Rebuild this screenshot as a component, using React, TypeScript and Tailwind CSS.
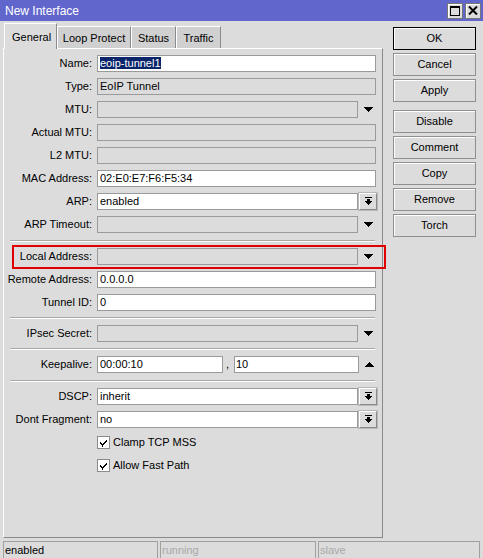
import React from 'react';

type Arrow = 'down' | 'up' | 'menu';

interface FieldProps {
  label: string;
  value?: string;
  enabled?: boolean;
  arrow?: Arrow;
  selected?: boolean;
}

const DownTriangle = () => (
  <svg width="9" height="5" viewBox="0 0 9 5" shapeRendering="crispEdges">
    <path d="M0 0H9L4.5 5Z" fill="#000" />
  </svg>
);

const UpTriangle = () => (
  <svg width="9" height="5" viewBox="0 0 9 5" shapeRendering="crispEdges">
    <path d="M0 5H9L4.5 0Z" fill="#000" />
  </svg>
);

const MenuButton = () => (
  <div className="w-[18px] h-[17px] ml-[1px] flex items-center justify-center bg-[#dcdcdc] border border-t-white border-l-white border-r-[#8a8a8a] border-b-[#8a8a8a] shadow-[0_0_0_1px_#b8b8b8]">
    <svg width="9" height="9" viewBox="0 0 9 9" shapeRendering="crispEdges">
      <rect x="1" y="0" width="7" height="1" fill="#000" />
      <rect x="3" y="2" width="3" height="2" fill="#000" />
      <path d="M1 4H8L4.5 8Z" fill="#000" />
    </svg>
  </div>
);

const ArrowSlot = ({ arrow }: { arrow?: Arrow }) => {
  if (arrow === 'menu') return <MenuButton />;
  return (
    <div className="w-[18px] h-[17px] ml-[1px] flex items-center justify-center">
      {arrow === 'up' ? <UpTriangle /> : <DownTriangle />}
    </div>
  );
};

const Field: React.FC<FieldProps> = ({ label, value, enabled, arrow, selected }) => (
  <div className="flex items-center h-[17px]">
    <div className="w-[88px] text-right whitespace-nowrap">{label}</div>
    <div
      className={`ml-[5px] h-[17px] border border-[#9a9a9a] px-[2px] leading-[15px] whitespace-nowrap overflow-hidden ${
        arrow ? 'w-[261px]' : 'w-[279px]'
      } ${enabled ? 'bg-white' : 'bg-[#dcdcdc]'}`}
    >
      {selected ? <span className="bg-[#0a246a] text-white">{value}</span> : value}
    </div>
    {arrow && <ArrowSlot arrow={arrow} />}
  </div>
);

const Separator = ({ className = '' }: { className?: string }) => (
  <div className={`ml-[6px] w-[365px] h-[2px] border-t border-t-[#a8a8a8] border-b border-b-white ${className}`} />
);

const Check: React.FC<{ label: string }> = ({ label }) => (
  <div className="flex items-center h-[17px] pl-[93px]">
    <div className="w-[13px] h-[13px] bg-white border border-[#8a8a8a] flex items-center justify-center">
      <svg width="9" height="9" viewBox="0 0 9 9" shapeRendering="crispEdges">
        <path d="M1 4L3.5 6.5L8 1.5V3.5L3.5 8.5L1 6Z" fill="#000" />
      </svg>
    </div>
    <span className="ml-[3px]">{label}</span>
  </div>
);

const Button: React.FC<{ label: string; primary?: boolean; className?: string }> = ({
  label,
  primary,
  className = ''
}) => (
  <div
    className={`w-[83px] h-[23px] flex items-center justify-center bg-[#dcdcdc] border shadow-[inset_1px_1px_0_#fff] ${
      primary ? 'border-black' : 'border-[#8f8f8f]'
    } ${className}`}
  >
    {label}
  </div>
);

export default function App() {
  return (
    <div className="w-[483px] h-[558px] bg-[#dcdcdc] flex flex-col overflow-hidden text-[11px] text-black font-['Liberation_Sans',Arial,sans-serif]">
      {/* title bar */}
      <div className="h-[21px] bg-[#6166cc] flex items-center pl-[5px] pr-[2px] shrink-0">
        <span className="text-white text-[12px]">New Interface</span>
        <div className="ml-auto flex gap-[2px]">
          <div className="w-[16px] h-[16px] bg-[#dcdcdc] border border-[#777] shadow-[inset_1px_1px_0_#fff] flex items-center justify-center">
            <svg width="10" height="10" viewBox="0 0 10 10" shapeRendering="crispEdges">
              <rect x="0.5" y="0.5" width="9" height="9" fill="none" stroke="#000" />
              <rect x="0" y="0" width="10" height="2" fill="#000" />
            </svg>
          </div>
          <div className="w-[16px] h-[16px] bg-[#dcdcdc] border border-[#777] shadow-[inset_1px_1px_0_#fff] flex items-center justify-center">
            <svg width="10" height="9" viewBox="0 0 10 9">
              <path d="M1 0.5L9 8.5M9 0.5L1 8.5" stroke="#000" strokeWidth="2" />
            </svg>
          </div>
        </div>
      </div>

      <div className="flex flex-1 pl-[3px]">
        {/* left: tabs + panel */}
        <div className="w-[380px] flex flex-col pt-[2px]">
          <div className="h-[25px] flex items-end pl-[1px]">
            <div className="relative z-10 w-[53px] h-[26px] mb-[-1px] bg-[#dcdcdc] border-t border-l border-white border-r border-r-[#8a8a8a] pl-[7px] pt-[5px]">
              General
            </div>
            <div className="w-[74px] h-[22px] bg-[#d0d0d0] border-t border-l border-white border-r border-r-[#8a8a8a] flex items-center justify-center pt-[2px]">
              Loop Protect
            </div>
            <div className="w-[45px] h-[22px] bg-[#d0d0d0] border-t border-l border-white border-r border-r-[#8a8a8a] flex items-center justify-center pt-[2px]">
              Status
            </div>
            <div className="w-[45px] h-[22px] bg-[#d0d0d0] border-t border-l border-white border-r border-r-[#8a8a8a] flex items-center justify-center pt-[2px]">
              Traffic
            </div>
          </div>

          <div className="flex-1 border-t border-l border-white border-r border-r-[#8a8a8a] border-b border-b-[#8a8a8a] pt-[6px] flex flex-col gap-[6px]">
            <Field label="Name:" value="eoip-tunnel1" enabled selected />
            <Field label="Type:" value="EoIP Tunnel" />
            <Field label="MTU:" arrow="down" />
            <Field label="Actual MTU:" />
            <Field label="L2 MTU:" />
            <Field label="MAC Address:" value="02:E0:E7:F6:F5:34" enabled />
            <Field label="ARP:" value="enabled" enabled arrow="menu" />
            <Field label="ARP Timeout:" arrow="down" />
            <Separator className="mt-[1px]" />
            <div className="relative">
              <Field label="Local Address:" arrow="down" />
              <div className="absolute left-[8px] top-[-3px] w-[374px] h-[24px] border-2 border-[#e00000] pointer-events-none" />
            </div>
            <Field label="Remote Address:" value="0.0.0.0" enabled />
            <Field label="Tunnel ID:" value="0" enabled />
            <Separator />
            <Field label="IPsec Secret:" arrow="down" />
            <Separator />
            <div className="flex items-center h-[17px]">
              <div className="w-[88px] text-right">Keepalive:</div>
              <div className="ml-[5px] w-[126px] h-[17px] border border-[#9a9a9a] bg-white px-[2px] leading-[15px]">
                00:00:10
              </div>
              <span className="w-[11px] pl-[3px]">,</span>
              <div className="w-[125px] h-[17px] border border-[#9a9a9a] bg-white px-[1px] leading-[15px]">
                10
              </div>
              <ArrowSlot arrow="up" />
            </div>
            <Separator className="mt-[1px]" />
            <Field label="DSCP:" value="inherit" enabled arrow="menu" />
            <Field label="Dont Fragment:" value="no" enabled arrow="menu" />
            <Check label="Clamp TCP MSS" />
            <Check label="Allow Fast Path" />
          </div>
        </div>

        {/* right: buttons */}
        <div className="ml-[10px] pt-[6px] flex flex-col gap-[3px]">
          <Button label="OK" primary />
          <Button label="Cancel" />
          <Button label="Apply" />
          <Button label="Disable" className="mt-[5px]" />
          <Button label="Comment" />
          <Button label="Copy" />
          <Button label="Remove" />
          <Button label="Torch" />
        </div>
      </div>

      {/* status bar */}
      <div className="h-[17px] mt-[3px] flex gap-[2px] pl-[3px] shrink-0">
        <div className="w-[155px] h-[18px] border border-[#a0a0a0] pl-[1px] leading-[16px]">enabled</div>
        <div className="w-[156px] h-[18px] border border-[#a0a0a0] pl-[1px] leading-[16px] text-[#a8a8a8]">running</div>
        <div className="w-[162px] h-[18px] border border-[#a0a0a0] pl-[1px] leading-[16px] text-[#a8a8a8]">slave</div>
      </div>
    </div>
  );
}
